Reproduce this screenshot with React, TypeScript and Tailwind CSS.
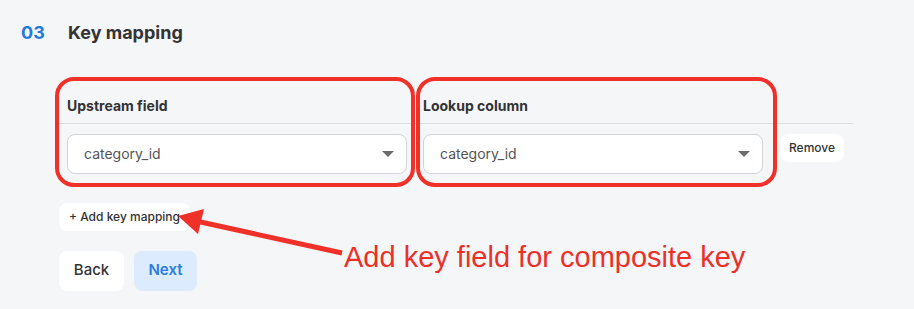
function Caret() {
  return (
    <svg width="12" height="6" viewBox="0 0 12 6" className="shrink-0">
      <path d="M0 0 L12 0 L6 6 Z" fill="#6b6b6b" />
    </svg>
  );
}

function SelectBox({ value }: { value: string }) {
  return (
    <div className="flex items-center justify-between h-10 rounded-lg border border-[#d4d4d8] bg-white pl-4 pr-3">
      <span className="text-[14px] text-[#555]">{value}</span>
      <Caret />
    </div>
  );
}

export default function App() {
  return (
    <div
      className="relative w-[914px] h-[309px] bg-[#f5f6f8] overflow-hidden"
      style={{ fontFamily: 'Inter, "Noto Sans", sans-serif' }}
    >
      <div className="pl-[21px] pt-[21px]">
        <div className="flex items-center h-[22px]">
          <span className="w-[47px] text-[18px] font-bold text-[#1f7ae0]">03</span>
          <span className="text-[18px] font-bold text-[#333]">Key mapping</span>
        </div>

        <table className="ml-[38px] mt-[40px] w-[794px] border-collapse">
          <thead>
            <tr className="border-b border-[#dcdde0]">
              <th className="h-[40px] w-[356px] px-2 pt-[5px] text-left text-[14px] font-bold text-[#333]">
                Upstream field
              </th>
              <th className="h-[40px] w-[356px] px-2 pt-[5px] text-left text-[14px] font-bold text-[#333]">
                Lookup column
              </th>
              <th />
            </tr>
          </thead>
          <tbody>
            <tr>
              <td className="px-2 pt-[10px] pb-[10px] align-top">
                <SelectBox value="category_id" />
              </td>
              <td className="px-2 pt-[10px] pb-[10px] align-top">
                <SelectBox value="category_id" />
              </td>
              <td className="pl-[9px] pt-[10px] align-top">
                <button className="h-7 rounded-lg bg-white px-[9px] text-[12px] font-medium text-[#333]">
                  Remove
                </button>
              </td>
            </tr>
          </tbody>
        </table>

        <div className="ml-[38px] mt-[19px] flex flex-col items-start gap-5">
          <button className="h-7 rounded-lg bg-white px-[10px] text-[12px] font-medium text-[#333]">
            + Add key mapping
          </button>
          <div className="flex gap-[10px]">
            <button className="h-10 w-[65px] rounded-lg bg-white text-[15px] font-medium text-[#333]">
              Back
            </button>
            <button className="h-10 w-[63px] rounded-lg bg-[#dcebfd] text-[15px] font-semibold text-[#2a7de1]">
              Next
            </button>
          </div>
        </div>
      </div>

      {/* annotation overlay */}
      <svg className="absolute inset-0 pointer-events-none" width="914" height="309">
        <rect x="57" y="79" width="356" height="106" rx="17" fill="none" stroke="#f0312a" strokeWidth="4" />
        <rect x="418" y="79" width="357" height="106" rx="17" fill="none" stroke="#f0312a" strokeWidth="4" />
        <line x1="342" y1="253" x2="196" y2="221" stroke="#f0312a" strokeWidth="5" />
        <path d="M178 216 L204 209 L198 234 Z" fill="#f0312a" />
      </svg>
      <div
        className="absolute left-[344px] top-[243px] text-[29px] leading-none text-[#ec3027] whitespace-nowrap"
        style={{ fontFamily: '"Liberation Sans", Arial, sans-serif' }}
      >
        Add key field for composite key
      </div>
    </div>
  );
}
